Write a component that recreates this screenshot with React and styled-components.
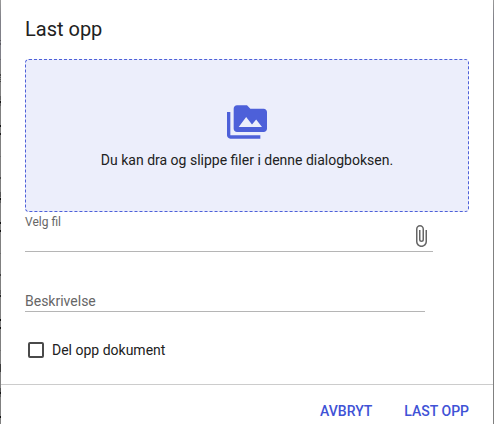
import { useState } from "react";

import styled, { createGlobalStyle } from "styled-components";
import { MdAttachFile, MdPermMedia } from "react-icons/md";

// lines of the page behind the dialog: [top, height, color]
const backdropLines = [
  [40, 1, "#55555a"],
  [43, 2, "#5c5c62"],
  [59, 1, "#68686e"],
  [74, 2, "#444"],
  [77, 1, "#555"],
  [79, 1, "#555"],
  [81, 1, "#444"],
  [96, 4, "#606060"],
  [101, 2, "#151515"],
  [103, 3, "#606060"],
  [125, 2, "#111"],
  [133, 2, "#1c1c1c"],
  [156, 1, "#6c6c6c"],
  [177, 2, "#484848"],
  [192, 5, "#555"],
  [198, 2, "#111"],
  [200, 3, "#5c5c5c"],
  [222, 2, "#111"],
  [230, 2, "#111"],
  [253, 1, "#6a6a6a"],
  [274, 2, "#404040"],
  [290, 4, "#606060"],
  [295, 2, "#222"],
  [319, 2, "#111"],
  [327, 2, "#151515"],
  [350, 1, "#6c6c6c"],
  [364, 8, "#3c3c3c"],
  [388, 4, "#555"],
  [392, 2, "#151515"],
  [394, 3, "#606060"],
  [416, 2, "#111"],
];

const backdropStops = backdropLines
  .map(
    ([top, height, color]) =>
      `transparent ${top}px, ${color} ${top}px, ${color} ${top + height}px, transparent ${top + height}px`
  )
  .join(", ");

export default function App() {
  const [shared, setShared] = useState(false);

  return (
    <Backdrop>
      <GlobalStyle />
      <Dialog>
        <Title>Last opp</Title>
        <Content>
          <DropZone>
            <MdPermMedia size={40} color="#4d60d9" />
            <DropText>Du kan dra og slippe filer i denne dialogboksen.</DropText>
          </DropZone>
          <FileField>
            <FileLabel>Velg fil</FileLabel>
            <AttachButton aria-label="Velg fil">
              <MdAttachFile size={24} />
            </AttachButton>
          </FileField>
          <DescriptionField>Beskrivelse</DescriptionField>
          <CheckRow>
            <Checkbox
              type="checkbox"
              checked={shared}
              onChange={(event) => setShared(event.target.checked)}
            />
            <span>Del opp dokument</span>
          </CheckRow>
        </Content>
        <Actions>
          <ActionButton>Avbryt</ActionButton>
          <ActionButton>Last opp</ActionButton>
        </Actions>
      </Dialog>
    </Backdrop>
  );
}

const GlobalStyle = createGlobalStyle`
  * {
    box-sizing: border-box;
  }

  body {
    margin: 0;
    overflow: hidden;
    font-family: Roboto, sans-serif;
    color: #212121;
  }
`;

const Backdrop = styled.div`
  height: 424px;
  padding: 0 1px;
  background:
    linear-gradient(${backdropStops}) 0 0 / 1px 100% no-repeat,
    linear-gradient(#999 0, #808088 20px, #808088 60px, #808080 70px);
`;

const Dialog = styled.div`
  display: flex;
  flex-direction: column;
  height: 100%;
  background-color: white;
`;

const Title = styled.h2`
  height: 59px;
  margin: 0;
  padding: 13px 24px 0;
  font-size: 20px;
  font-weight: 400;
  line-height: 32px;
`;

const Content = styled.div`
  height: 325px;
  padding: 0 24px;
`;

const DropZone = styled.div`
  display: flex;
  flex-direction: column;
  align-items: center;
  height: 153px;
  padding-top: 42px;
  border: 1px dashed #4d60d9;
  border-radius: 4px;
  background-color: #eceefb;
`;

const DropText = styled.p`
  margin: 8px 0 0;
  font-size: 14px;
  line-height: 20px;
`;

const FileField = styled.div`
  display: flex;
  justify-content: space-between;
  width: 408px;
  height: 40px;
  border-bottom: 1px solid #b5b5b5;
`;

const FileLabel = styled.label`
  padding-top: 2px;
  font-size: 12px;
  line-height: 16px;
  color: #666;
`;

const AttachButton = styled.button`
  display: flex;
  height: 24px;
  margin: 12px 0 0;
  padding: 0;
  border: 0;
  background: none;
  color: #666;
`;

const DescriptionField = styled.div`
  width: 400px;
  height: 60px;
  padding-top: 39px;
  border-bottom: 1px solid #b5b5b5;
  font-size: 14px;
  line-height: 20px;
  color: #666;
`;

const CheckRow = styled.label`
  display: flex;
  align-items: center;
  gap: 8px;
  margin-top: 28px;
  padding-left: 3px;
  font-size: 14px;
  line-height: 20px;
`;

const Checkbox = styled.input`
  appearance: none;
  width: 16px;
  height: 16px;
  margin: 0;
  border: 2px solid #4a4a4a;
  border-radius: 2px;
  background-color: ${(props) => (props.checked ? "#3f51d6" : "white")};
`;

const Actions = styled.div`
  display: flex;
  flex: 1;
  justify-content: flex-end;
  gap: 32px;
  padding: 16px 24px 0;
  border-top: 1px solid #ccc;
`;

const ActionButton = styled.button`
  height: 20px;
  padding: 0;
  border: 0;
  background: none;
  color: #4052d6;
  font-family: inherit;
  font-size: 14px;
  font-weight: 500;
  line-height: 20px;
  text-transform: uppercase;
`;
